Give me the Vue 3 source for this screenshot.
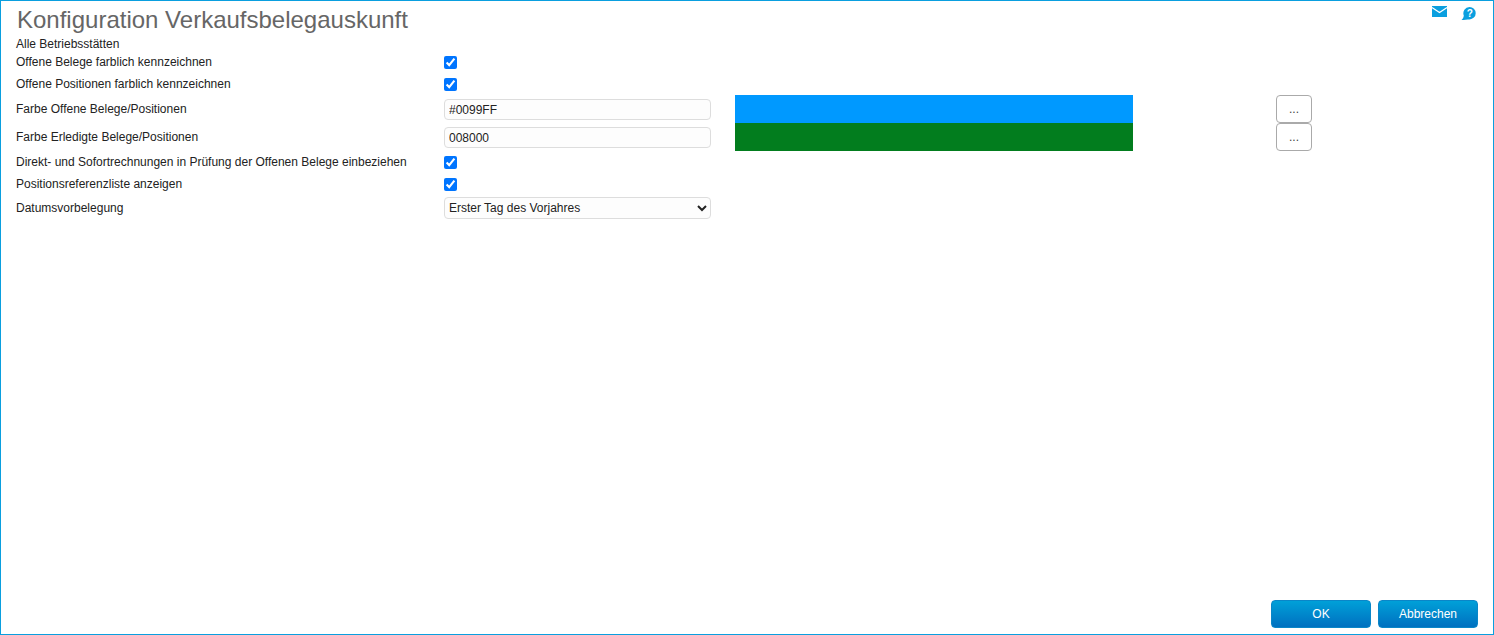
<script setup>
const swatchRows = [
  { label: 'Farbe Offene Belege/Positionen', value: '#0099FF', color: '#0099ff' },
  { label: 'Farbe Erledigte Belege/Positionen', value: '008000', color: '#027d1e' }
]
</script>

<template>
  <div class="frame">
    <header class="head">
      <h1 class="title">Konfiguration Verkaufsbelegauskunft</h1>
      <div class="tools">
        <svg width="15" height="11" viewBox="0 0 15 11"><path fill="#0a9fdf" d="M0 0h15v11H0z"/><path fill="none" stroke="#fff" stroke-width="1.2" d="M0 1.500l7.500 5 7.500-5"/></svg>
        <svg class="help" width="15" height="13" viewBox="0 0 15 13"><path fill="#0a9fdf" d="M8.500 0a6.200 6.200 0 0 1 0 12.400c-2 0-5.500.6-8 .6 1-.8 2.200-2 2.300-4.400A6.300 6.300 0 0 1 8.500 0z"/><text x="8.700" y="9.800" text-anchor="middle" class="q">?</text></svg>
      </div>
    </header>
    <div class="sub">Alle Betriebsstätten</div>
    <div class="form">
      <div class="row r22">
        <label class="lab">Offene Belege farblich kennzeichnen</label>
        <input class="chk" type="checkbox" checked />
      </div>
      <div class="row r22">
        <label class="lab">Offene Positionen farblich kennzeichnen</label>
        <input class="chk" type="checkbox" checked />
      </div>
      <div v-for="r in swatchRows" :key="r.label" class="row r28">
        <label class="lab">{{ r.label }}</label>
        <input class="txt" type="text" :value="r.value" />
        <div class="swatch" :style="{ background: r.color }"></div>
        <button class="dots" type="button">...</button>
      </div>
      <div class="row r22">
        <label class="lab">Direkt- und Sofortrechnungen in Prüfung der Offenen Belege einbeziehen</label>
        <input class="chk" type="checkbox" checked />
      </div>
      <div class="row r22">
        <label class="lab">Positionsreferenzliste anzeigen</label>
        <input class="chk" type="checkbox" checked />
      </div>
      <div class="row r26">
        <label class="lab">Datumsvorbelegung</label>
        <select class="sel">
          <option>Erster Tag des Vorjahres</option>
        </select>
      </div>
    </div>
    <footer class="foot">
      <button class="btn ok" type="button">OK</button>
      <button class="btn" type="button">Abbrechen</button>
    </footer>
  </div>
</template>

<style>
html, body { margin: 0; padding: 0; background: #fff; }
</style>

<style scoped>
.frame {
  box-sizing: border-box;
  width: 1494px;
  height: 635px;
  border: 1px solid #0a9fdf;
  display: flex;
  flex-direction: column;
  font-family: "Liberation Sans", Arial, sans-serif;
  font-size: 12px;
  color: #222;
  overflow: hidden;
}
.head {
  display: flex;
  justify-content: space-between;
  align-items: flex-start;
  height: 34px;
  padding: 0 17px 0 16px;
}
.title {
  margin: 6px 0 0;
  font-size: 24px;
  line-height: 26px;
  font-weight: 400;
  color: #666;
}
.tools {
  display: flex;
  gap: 14px;
  padding-top: 5px;
}
.help { margin-top: 1px; }
.q { font: bold 10px "Liberation Sans", sans-serif; fill: #fff; }
.sub {
  height: 16px;
  line-height: 18px;
  padding-left: 15px;
}
.form { display: flex; flex-direction: column; }
.row {
  display: grid;
  grid-template-columns: 428px 267px 24px 398px 143px 36px;
  align-items: center;
  padding-left: 15px;
}
.r22 { height: 22px; }
.r26 { height: 26px; }
.r28 { height: 28px; }
.lab { grid-column: 1; padding-bottom: 1px; }
.chk {
  grid-column: 2;
  justify-self: start;
  margin: 0;
  width: 13px;
  height: 13px;
}
.txt, .sel {
  grid-column: 2;
  box-sizing: border-box;
  width: 267px;
  height: 22px;
  margin: 0;
  border: 1px solid #ddd;
  border-radius: 4px;
  background: #fdfdfd;
  font: 12px "Liberation Sans", Arial, sans-serif;
  color: #222;
  padding: 0 4px;
}
.txt { height: 21px; margin-top: 1px; }
.sel { padding: 0; }
.swatch { grid-column: 4; height: 28px; }
.dots {
  grid-column: 6;
  box-sizing: border-box;
  width: 36px;
  height: 28px;
  margin: 0;
  padding: 0;
  border: 1px solid #aaa;
  border-radius: 4px;
  background: #fff;
  font: 12px "Liberation Sans", Arial, sans-serif;
  color: #444;
}
.foot {
  margin-top: auto;
  display: flex;
  justify-content: flex-end;
  gap: 7px;
  padding: 0 15px 6px 0;
}
.btn {
  box-sizing: border-box;
  width: 100px;
  height: 28px;
  margin: 0;
  border: 1px solid #0a86c8;
  border-radius: 4px;
  background: linear-gradient(#00a0d8, #0070c0);
  color: #fff;
  font: 12px "Liberation Sans", Arial, sans-serif;
}
</style>
